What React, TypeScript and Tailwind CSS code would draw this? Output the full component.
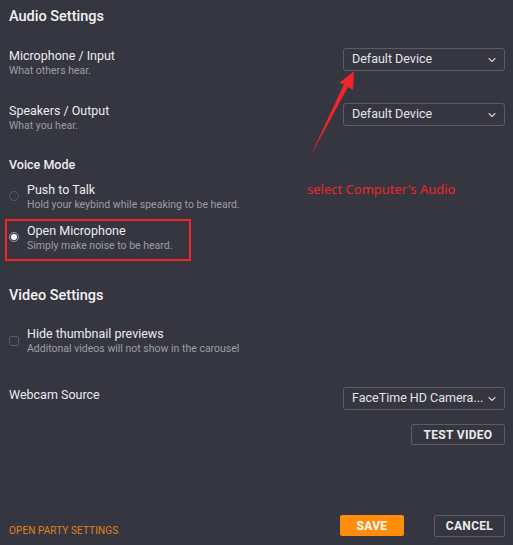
import { ChevronDown } from 'lucide-react'

function Select({ label }: { label: string }) {
  return (
    <div className="w-[162px] h-[23px] border border-[#5b5c66] rounded-[3px] flex items-center justify-between pl-[8px] pr-[6px] text-[12.5px] text-[#e4e4e6]">
      <span className="truncate">{label}</span>
      <ChevronDown className="w-[12px] h-[12px] text-[#cfcfd3] shrink-0" strokeWidth={2.2} />
    </div>
  )
}

function Row({ title, sub, label }: { title: string; sub: string; label: string }) {
  return (
    <div className="flex items-start justify-between">
      <div>
        <div className="text-[12.5px] leading-[16px] text-[#ececee]">{title}</div>
        <div className="text-[10.5px] leading-[14px] text-[#9d9ea4]">{sub}</div>
      </div>
      <Select label={label} />
    </div>
  )
}

export default function App() {
  return (
    <div className="relative w-[513px] h-[545px] bg-[#35363f] text-white font-['Roboto',sans-serif] overflow-hidden">
      <div className="flex flex-col px-[9px] pt-[8px] pr-[8px]">
        <div className="text-[14.5px] font-medium leading-[18px] text-[#f2f2f4]">Audio Settings</div>

        <div className="mt-[22px]">
          <Row title="Microphone / Input" sub="What others hear." label="Default Device" />
        </div>
        <div className="mt-[25px]">
          <Row title="Speakers / Output" sub="What you hear." label="Default Device" />
        </div>

        <div className="mt-[24px] text-[12.5px] font-medium leading-[16px] text-[#ececee]">Voice Mode</div>

        <div className="mt-[9px] flex items-start gap-[8px]">
          <div className="mt-[9px] w-[10px] h-[10px] rounded-full border border-[#5b5c66]" />
          <div>
            <div className="text-[12.5px] leading-[16px] text-[#ececee]">Push to Talk</div>
            <div className="text-[10.5px] leading-[14px] text-[#9d9ea4]">Hold your keybind while speaking to be heard.</div>
          </div>
        </div>
        <div className="mt-[11px] flex items-start gap-[8px]">
          <div className="mt-[9px] w-[10px] h-[10px] rounded-full border border-[#9d9ea4] flex items-center justify-center">
            <div className="w-[6px] h-[6px] rounded-full bg-white" />
          </div>
          <div>
            <div className="text-[12.5px] leading-[16px] text-[#ececee]">Open Microphone</div>
            <div className="text-[10.5px] leading-[14px] text-[#9d9ea4]">Simply make noise to be heard.</div>
          </div>
        </div>

        <div className="mt-[34px] text-[14.5px] font-medium leading-[18px] text-[#f2f2f4]">Video Settings</div>

        <div className="mt-[21px] flex items-start gap-[8px]">
          <div className="mt-[10px] w-[10px] h-[10px] rounded-[2px] border border-[#5b5c66]" />
          <div>
            <div className="text-[12.5px] leading-[16px] text-[#ececee]">Hide thumbnail previews</div>
            <div className="text-[10.5px] leading-[14px] text-[#9d9ea4]">Additonal videos will not show in the carousel</div>
          </div>
        </div>

        <div className="mt-[31px] flex items-start justify-between">
          <div className="text-[12.5px] leading-[16px] text-[#ececee]">Webcam Source</div>
          <Select label="FaceTime HD Camera..." />
        </div>
        <div className="mt-[14px] flex justify-end">
          <div className="w-[94px] h-[21px] border border-[#5b5c66] rounded-[2px] flex items-center justify-center text-[12px] font-bold tracking-[0.3px] text-[#ececee]">
            TEST VIDEO
          </div>
        </div>

        <div className="mt-[68px] flex items-center">
          <div className="text-[10px] text-[#e0821f] tracking-[0.1px] mt-[10px]">OPEN PARTY SETTINGS</div>
          <div className="ml-auto w-[64px] h-[21px] bg-[#ff8c0a] rounded-[2px] flex items-center justify-center text-[12px] font-bold tracking-[0.3px] text-white">
            SAVE
          </div>
          <div className="ml-[30px] w-[71px] h-[22px] border border-[#5b5c66] rounded-[2px] flex items-center justify-center text-[12px] font-bold tracking-[0.3px] text-[#ececee]">
            CANCEL
          </div>
        </div>
      </div>

      {/* annotations */}
      <div className="absolute left-[5px] top-[219px] w-[186px] h-[42px] border-2 border-[#f0262b]" />
      <div className="absolute left-[307px] top-[180px] text-[13px] text-[#f0262b] font-['Noto_Sans',sans-serif]">
        select Computer's Audio
      </div>
      <svg className="absolute left-0 top-0" width="513" height="545" viewBox="0 0 513 545">
        <polygon points="354,71 353,90 348,87 310,157 344,84 339,83" fill="#f0262b" />
      </svg>
    </div>
  )
}
